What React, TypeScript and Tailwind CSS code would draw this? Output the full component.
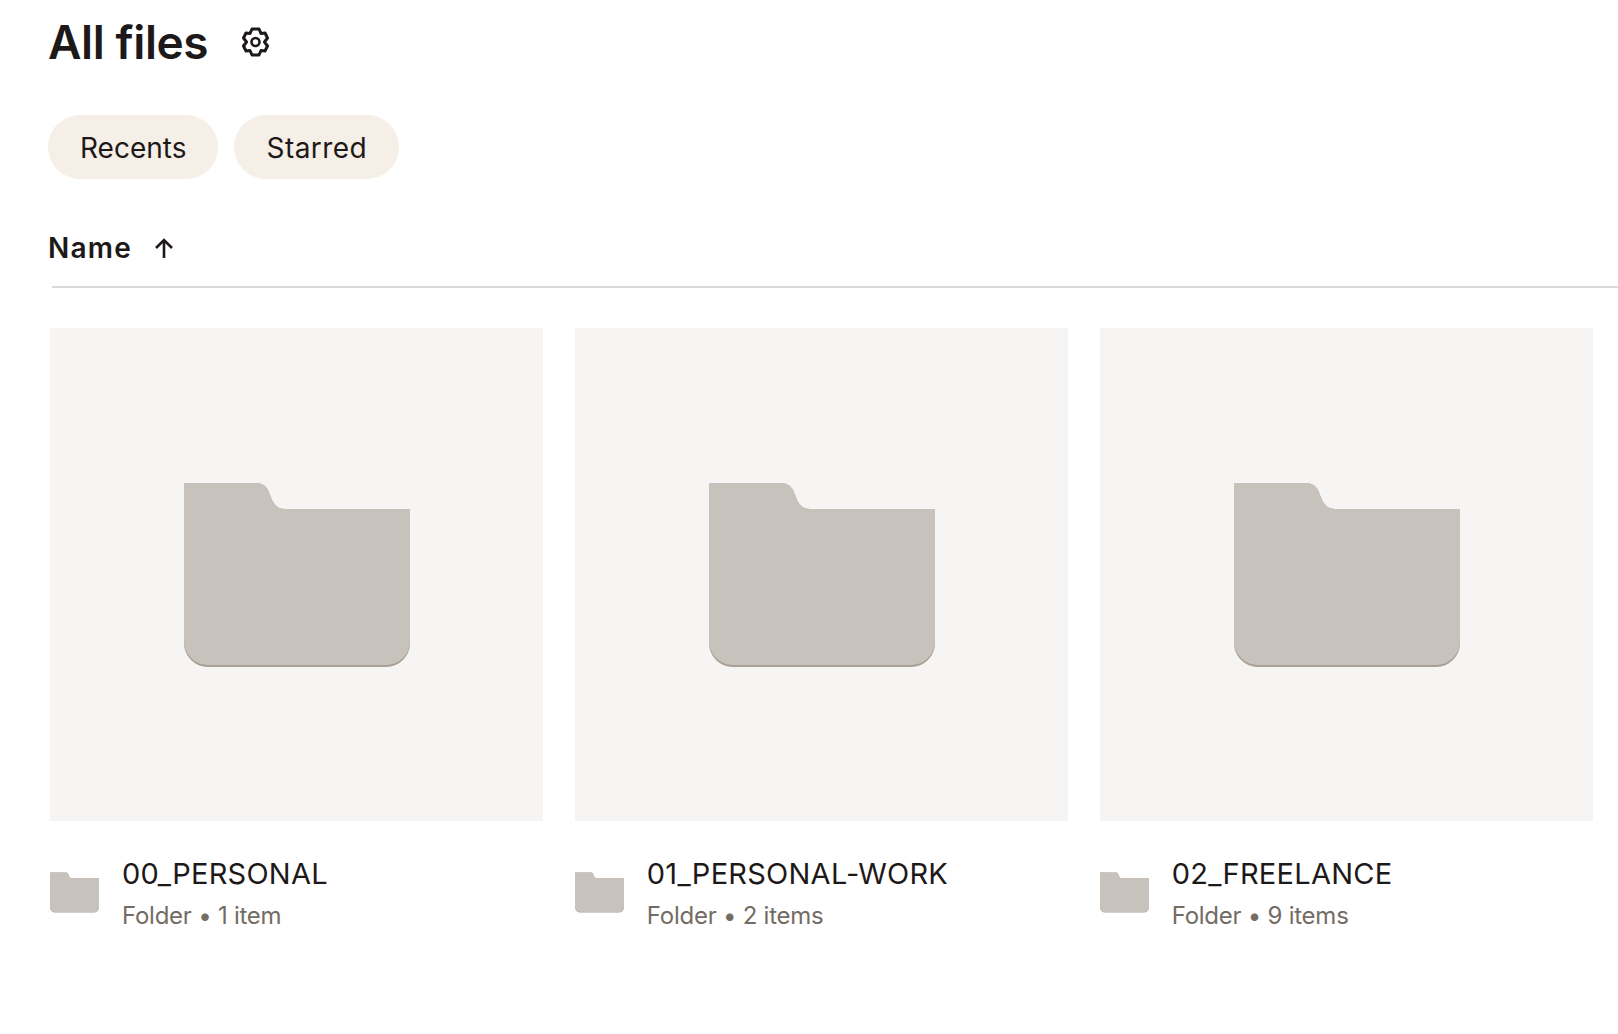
import React from 'react';

const folders = [
  { name: '00_PERSONAL', meta: 'Folder • 1 item' },
  { name: '01_PERSONAL-WORK', meta: 'Folder • 2 items' },
  { name: '02_FREELANCE', meta: 'Folder • 9 items' },
];

const FolderIcon: React.FC<{ className: string }> = ({ className }) => (
  <svg viewBox="0 0 226 184" className={className}>
    <path
      d="M0 0H72C77 0 81 2 84 7L88 17C91 23 95 26 101 26H226V160A24 24 0 0 1 202 184H24A24 24 0 0 1 0 160Z"
      fill="#a89f96"
    />
    <path
      d="M0 0H72C77 0 81 2 84 7L88 17C91 23 95 26 101 26H226V158A24 24 0 0 1 202 182H24A24 24 0 0 1 0 158Z"
      fill="#c7c2bb"
    />
  </svg>
);

const GearIcon = () => (
  <svg viewBox="0 0 27 30" className="w-[27px] h-[30px]" fill="none" stroke="#1e1919" strokeWidth="3" strokeLinejoin="round">
    <path d="M10 2H17L19 6.5L23 6L25.5 11L22.5 15L25.5 19L23 24L19 23.5L17 28H10L8 23.5L4 24L1.5 19L4.5 15L1.5 11L4 6L8 6.5Z" />
    <circle cx="13.5" cy="15" r="4" strokeWidth="2.6" />
  </svg>
);

const SortArrow = () => (
  <svg viewBox="0 0 20 20" className="w-5 h-5" fill="none" stroke="#1e1919" strokeWidth="2.6">
    <path d="M10 20V3M2 10L10 2L18 10" />
  </svg>
);

export default function App() {
  return (
    <div className="min-h-[1034px] bg-white font-['Inter',sans-serif] text-[#1e1919] overflow-hidden">
      <div className="flex items-center gap-[34px] pl-12 h-[84px]">
        <h1 className="text-[46px] leading-none font-semibold tracking-[-0.4px]">All files</h1>
        <GearIcon />
      </div>

      <div className="flex gap-4 pl-12 mt-[31px]">
        <button className="h-16 px-8 pt-0.5 rounded-full bg-[#f5efe8] text-[28px]">Recents</button>
        <button className="h-16 px-8 pt-0.5 rounded-full bg-[#f5efe8] text-[28px] tracking-[0.45px]">Starred</button>
      </div>

      <div className="flex items-center gap-[22px] pl-12 mt-[51px] h-9">
        <span className="text-[28px] font-semibold tracking-[1.2px]">Name</span>
        <SortArrow />
      </div>

      <div className="ml-[52px] mt-5 h-0.5 bg-[#d9d9d9]" />

      <div className="grid grid-cols-3 gap-8 pl-[50px] pr-[25.5px] mt-10">
        {folders.map((folder) => (
          <div key={folder.name}>
            <div className="flex items-center justify-center aspect-square pl-px pt-px bg-[#f6f5f3]">
              <FolderIcon className="w-[226px] h-[184px]" />
            </div>
            <div className="flex items-center gap-[23px] mt-[35px]">
              <FolderIcon className="w-[49px] h-[41px] mb-[3px]" />
              <div>
                <div className="text-[29px] leading-[36px] tracking-[0.25px]">{folder.name}</div>
                <div className="text-2xl leading-[32px] tracking-[-0.25px] text-[#736c64] mt-2">{folder.meta}</div>
              </div>
            </div>
          </div>
        ))}
      </div>
    </div>
  );
}
